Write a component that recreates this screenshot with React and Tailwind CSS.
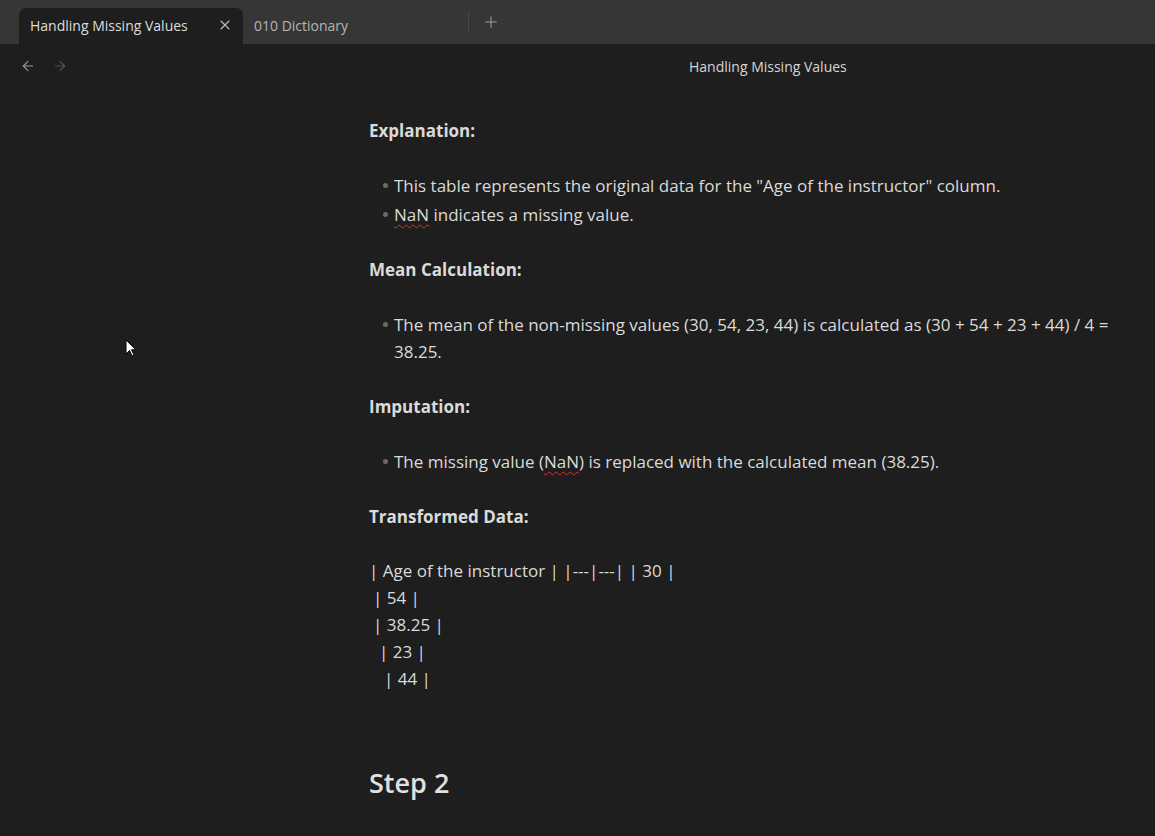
import { X, Plus, ArrowLeft, ArrowRight } from "lucide-react";

const font = { fontFamily: '"Open Sans", "Noto Sans", sans-serif' };

function Bullet({ children }) {
  return (
    <li className="flex items-start">
      <span className="w-[25px] shrink-0 flex justify-end pr-[6px] pt-[11px]">
        <span className="block w-[5px] h-[5px] rounded-full bg-[#6b6b6b]"></span>
      </span>
      <span>{children}</span>
    </li>
  );
}

function Nan() {
  return <span className="underline decoration-wavy decoration-[#e03030] decoration-1 underline-offset-[3px]">NaN</span>;
}

export default function App() {
  return (
    <div className="relative w-[1155px] h-[836px] overflow-hidden bg-[#1e1e1e] text-[#dadada]" style={font}>
      {/* tab bar */}
      <div className="h-[44px] bg-[#363636] flex items-end pl-[19px]">
        <div className="w-[224px] h-[36px] bg-[#1e1e1e] rounded-t-[7px] flex items-center justify-between pl-[11px] pr-[10px] pb-[2px]">
          <span className="text-[14px] text-[#dcdcdc]">Handling Missing Values</span>
          <X size={16} strokeWidth={1.6} className="text-[#bdbdbd]" />
        </div>
        <div className="w-[225px] h-[36px] flex items-center pl-[11px] pb-[2px]">
          <span className="text-[14px] text-[#b5b5b5]">010 Dictionary</span>
        </div>
        <div className="self-center h-[22px] flex items-center pl-[13px] border-l border-[#474747]">
          <Plus size={18} strokeWidth={1.5} className="text-[#9a9a9a]" />
        </div>
      </div>

      {/* nav row */}
      <div className="h-[44px] flex items-center pl-[20px]">
        <ArrowLeft size={16} strokeWidth={1.6} className="text-[#9a9a9a]" />
        <ArrowRight size={16} strokeWidth={1.6} className="text-[#555] ml-[16px]" />
        <span className="ml-[621px] text-[14px] text-[#d6d6d6]">Handling Missing Values</span>
      </div>

      {/* note body */}
      <div className="pl-[369px] pr-[26px] pt-[29px] text-[17px] leading-[27px]">
        <p className="font-bold">Explanation:</p>
        <ul className="mt-[28px] flex flex-col gap-[2px]">
          <Bullet>This table represents the original data for the "Age of the instructor" column.</Bullet>
          <Bullet><Nan /> indicates a missing value.</Bullet>
        </ul>
        <p className="font-bold mt-[28px]">Mean Calculation:</p>
        <ul className="mt-[28px]">
          <Bullet>The mean of the non-missing values (30, 54, 23, 44) is calculated as (30 + 54 + 23 + 44) / 4 = 38.25.</Bullet>
        </ul>
        <p className="font-bold mt-[28px]">Imputation:</p>
        <ul className="mt-[28px]">
          <Bullet>The missing value (<Nan />) is replaced with the calculated mean (38.25).</Bullet>
        </ul>
        <p className="font-bold mt-[28px]">Transformed Data:</p>
        <div className="mt-[27px]">
          <p>| Age of the instructor | |---|---| | 30 |</p>
          <p className="pl-[4px]">| 54 |</p>
          <p className="pl-[4px]">| 38.25 |</p>
          <p className="pl-[10px]">| 23 |</p>
          <p className="pl-[15px]">| 44 |</p>
        </div>
        <h2 className="mt-[71px] text-[27px] leading-[40px] font-semibold text-[#e0e0e0]">Step 2</h2>
      </div>

      {/* mouse pointer */}
      <svg className="absolute left-[125px] top-[339px]" width="12" height="19" viewBox="0 0 12 19">
        <path d="M1 1 L1 15 L4.5 11.5 L7 17 L9 16 L6.5 10.8 L11 10.8 Z" fill="#fff" stroke="#000" strokeWidth="1" />
      </svg>
    </div>
  );
}
